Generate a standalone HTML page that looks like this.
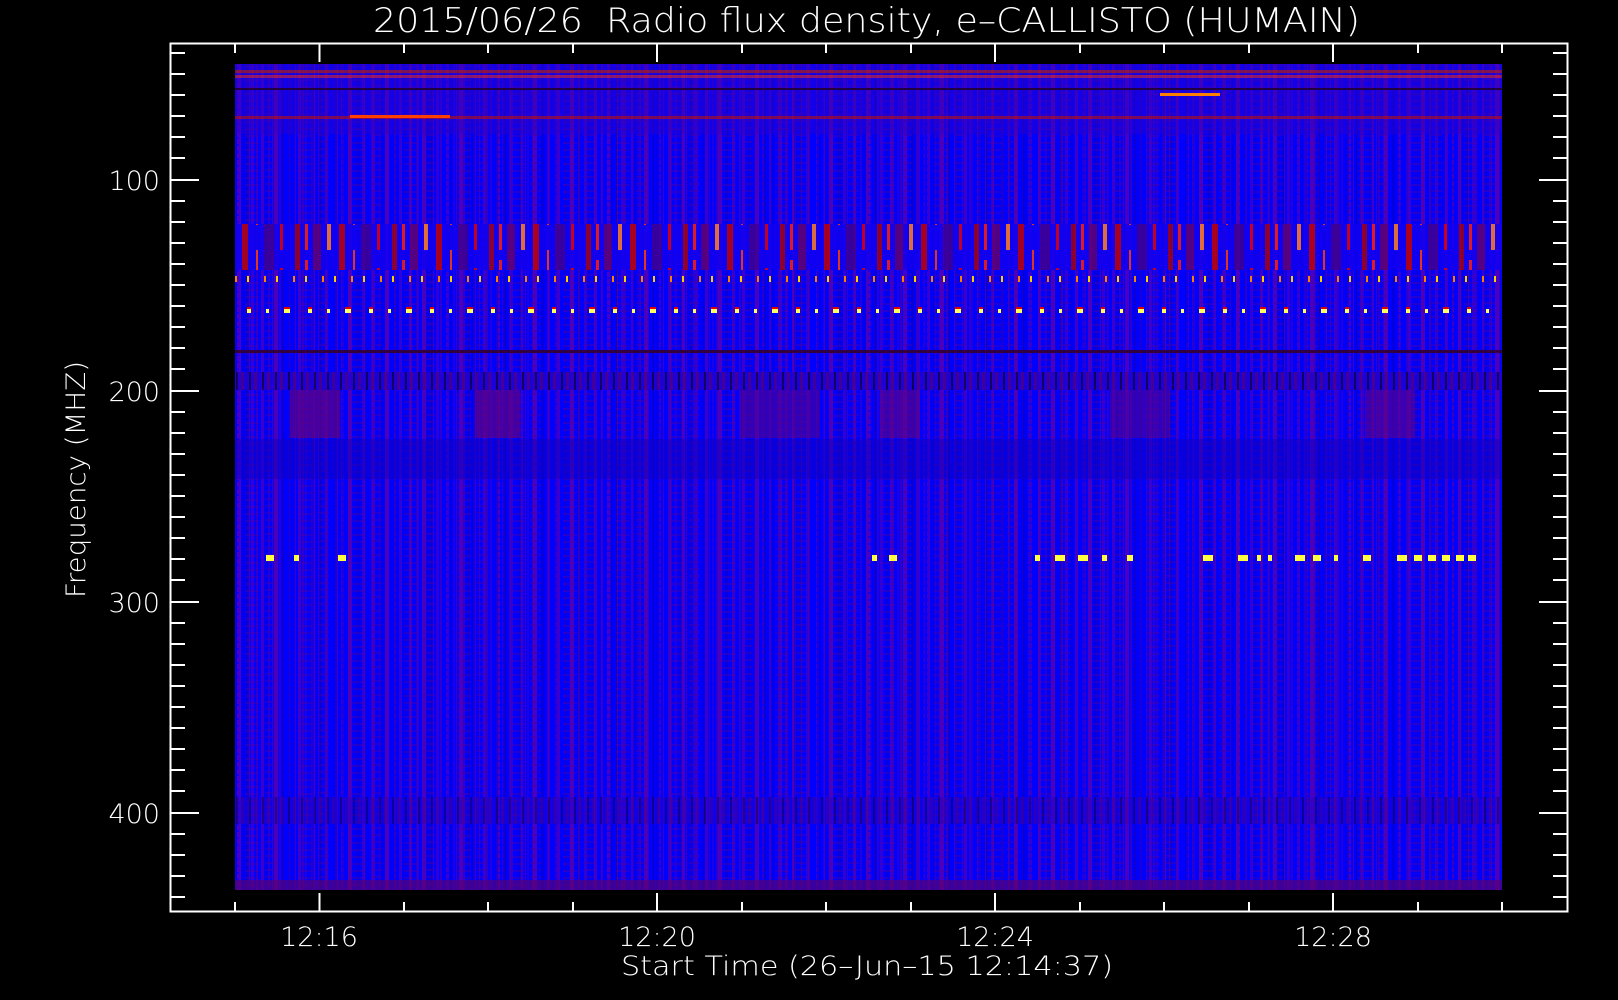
<!DOCTYPE html>
<html><head><meta charset="utf-8"><style>
html,body{margin:0;padding:0;background:#000;width:1618px;height:1000px;overflow:hidden}
svg{display:block}
text{font-family:"DejaVu Sans","Liberation Sans",sans-serif;font-weight:200;fill:#fff}
</style></head><body>
<svg width="1618" height="1000" viewBox="0 0 1618 1000" xmlns="http://www.w3.org/2000/svg">
<defs>
<pattern id="p1" width="37" height="900" patternUnits="userSpaceOnUse">
<rect x="0" y="0" width="37" height="900" fill="#0000ff"/>
<rect x="2" y="0" width="3" height="900" fill="#3a00d0"/>
<rect x="9" y="0" width="2" height="900" fill="#2000e0"/>
<rect x="15" y="0" width="4" height="900" fill="#4a00c0"/>
<rect x="24" y="0" width="1" height="900" fill="#1800a8"/>
<rect x="29" y="0" width="3" height="900" fill="#3000d8"/>
</pattern>
<pattern id="p2" width="23" height="900" patternUnits="userSpaceOnUse">
<rect x="3" y="0" width="2" height="900" fill="#5a00a0" opacity=".5"/>
<rect x="12" y="0" width="3" height="900" fill="#0000e0" opacity=".6"/>
<rect x="19" y="0" width="1" height="900" fill="#600090" opacity=".6"/>
</pattern>
<pattern id="hn" width="53" height="7" patternUnits="userSpaceOnUse">
<rect x="0" y="1" width="11" height="2" fill="#4000b0" opacity=".5"/>
<rect x="20" y="4" width="7" height="2" fill="#0000ff" opacity=".6"/>
<rect x="33" y="2" width="14" height="2" fill="#5000a0" opacity=".4"/>
</pattern>
<pattern id="burst" width="97" height="50" patternUnits="userSpaceOnUse">
<rect width="97" height="50" fill="#1000f0"/>
<rect x="4" width="5" height="50" fill="#a00010"/>
<rect x="14" y="10" width="3" height="40" fill="#ff2000"/>
<rect x="22" width="8" height="50" fill="#600070"/>
<rect x="36" y="20" width="4" height="30" fill="#ff8020"/>
<rect x="48" width="6" height="50" fill="#c00000"/>
<rect x="62" width="2" height="25" fill="#ff4000"/>
<rect x="70" width="10" height="50" fill="#400090"/>
<rect x="86" y="18" width="3" height="32" fill="#e00000"/>
</pattern>
<pattern id="dots" width="61" height="20" patternUnits="userSpaceOnUse">
<rect x="3" y="0" width="4" height="6" fill="#000"/>
<rect x="3" y="6" width="4" height="3" fill="#e00000"/>
<rect x="3" y="9" width="4" height="4" fill="#ffff60"/>
<rect x="22" y="0" width="3" height="6" fill="#000"/>
<rect x="22" y="9" width="3" height="4" fill="#ffff60"/>
<rect x="40" y="0" width="6" height="6" fill="#000"/>
<rect x="40" y="6" width="6" height="3" fill="#e00000"/>
<rect x="40" y="9" width="6" height="4" fill="#ffff60"/>
</pattern>
<pattern id="tick1" width="29" height="10" patternUnits="userSpaceOnUse">
<rect x="3" width="2" height="10" fill="#ff8000"/>
<rect x="15" width="2" height="10" fill="#ffd000"/>
</pattern>
<pattern id="dark" width="13" height="50" patternUnits="userSpaceOnUse">
<rect width="13" height="50" fill="#2000d0"/>
<rect x="2" width="2" height="50" fill="#100040"/>
<rect x="7" width="3" height="50" fill="#500080"/>
</pattern>
</defs>
<rect x="235" y="64" width="1267" height="826" fill="url(#p1)"/>
<rect x="235" y="64" width="1267" height="826" fill="url(#p2)"/>
<rect x="235" y="64" width="1267" height="826" fill="url(#hn)"/>
<rect x="235" y="64" width="1267" height="70" fill="#3000c0" opacity=".4"/>
<rect x="235" y="70" width="1267" height="3" fill="#c02000" opacity=".6"/>
<rect x="235" y="75" width="1267" height="3" fill="#ff3000" opacity=".5"/>
<rect x="235" y="88" width="1267" height="2" fill="#200040"/>
<rect x="235" y="116" width="1267" height="3" fill="#c01000" opacity=".6"/>
<rect x="350" y="115" width="100" height="3" fill="#ff4000"/>
<rect x="1160" y="93" width="60" height="3" fill="#ff8000"/>
<rect x="235" y="224" width="1267" height="46" fill="url(#burst)" opacity=".85"/>
<rect x="235" y="276" width="1267" height="6" fill="url(#tick1)"/>
<rect x="235" y="307" width="1267" height="13" fill="url(#dots)"/>
<rect x="235" y="350" width="1267" height="3" fill="#300040"/>
<rect x="235" y="372" width="1267" height="18" fill="url(#dark)" opacity=".8"/>
<rect x="290" y="390" width="50" height="48" fill="#600080" opacity=".7"/>
<rect x="475" y="390" width="45" height="48" fill="#600080" opacity=".7"/>
<rect x="740" y="390" width="80" height="48" fill="#500090" opacity=".6"/>
<rect x="880" y="390" width="40" height="48" fill="#600080" opacity=".6"/>
<rect x="1110" y="390" width="60" height="48" fill="#500090" opacity=".6"/>
<rect x="1365" y="390" width="50" height="48" fill="#600080" opacity=".6"/>
<rect x="235" y="439" width="1267" height="40" fill="#1000c0" opacity=".5"/>
<g fill="#ffff40">
<rect x="266" y="555" width="8" height="6"/><rect x="294" y="555" width="5" height="6"/><rect x="338" y="555" width="8" height="6"/>
<rect x="872" y="555" width="5" height="6"/><rect x="889" y="555" width="8" height="6"/>
<rect x="1035" y="555" width="5" height="6"/><rect x="1055" y="555" width="10" height="6"/><rect x="1078" y="555" width="10" height="6"/><rect x="1102" y="555" width="5" height="6"/><rect x="1127" y="555" width="6" height="6"/>
<rect x="1203" y="555" width="10" height="6"/><rect x="1238" y="555" width="10" height="6"/><rect x="1257" y="555" width="4" height="6"/><rect x="1268" y="555" width="4" height="6"/><rect x="1295" y="555" width="10" height="6"/><rect x="1313" y="555" width="8" height="6"/><rect x="1334" y="555" width="4" height="6"/><rect x="1363" y="555" width="8" height="6"/><rect x="1397" y="555" width="10" height="6"/><rect x="1414" y="555" width="8" height="6"/><rect x="1428" y="555" width="8" height="6"/><rect x="1442" y="555" width="8" height="6"/><rect x="1456" y="555" width="8" height="6"/><rect x="1468" y="555" width="8" height="6"/>
</g>
<rect x="235" y="797" width="1267" height="27" fill="url(#dark)" opacity=".5"/>
<rect x="235" y="880" width="1267" height="10" fill="#600060" opacity=".6"/>
<rect x="170.5" y="43.5" width="1397" height="868" fill="none" stroke="#fff" stroke-width="2"/>
<g stroke="#fff" stroke-width="2">
<path d="M235 44v9M235 911v-9M319.5 44v18M319.5 911v-18M404 44v9M404 911v-9M488 44v9M488 911v-9M573 44v9M573 911v-9M657 44v18M657 911v-18M742 44v9M742 911v-9M826 44v9M826 911v-9M911 44v9M911 911v-9M995 44v18M995 911v-18M1080 44v9M1080 911v-9M1164 44v9M1164 911v-9M1249 44v9M1249 911v-9M1333 44v18M1333 911v-18M1418 44v9M1418 911v-9M1502 44v9M1502 911v-9"/>
<path d="M171 53h14M171 74h14M171 95h14M171 116h14M171 137h14M171 158h14M171 180h28M171 201h14M171 222h14M171 243h14M171 264h14M171 285h14M171 306h14M171 327h14M171 348h14M171 369h14M171 391h28M171 412h14M171 433h14M171 454h14M171 475h14M171 496h14M171 517h14M171 538h14M171 559h14M171 580h14M171 602h28M171 623h14M171 644h14M171 665h14M171 686h14M171 707h14M171 728h14M171 749h14M171 770h14M171 791h14M171 813h28M171 834h14M171 855h14M171 876h14M171 897h14"/>
<path d="M1567 53h-14M1567 74h-14M1567 95h-14M1567 116h-14M1567 137h-14M1567 158h-14M1567 180h-28M1567 201h-14M1567 222h-14M1567 243h-14M1567 264h-14M1567 285h-14M1567 306h-14M1567 327h-14M1567 348h-14M1567 369h-14M1567 391h-28M1567 412h-14M1567 433h-14M1567 454h-14M1567 475h-14M1567 496h-14M1567 517h-14M1567 538h-14M1567 559h-14M1567 580h-14M1567 602h-28M1567 623h-14M1567 644h-14M1567 665h-14M1567 686h-14M1567 707h-14M1567 728h-14M1567 749h-14M1567 770h-14M1567 791h-14M1567 813h-28M1567 834h-14M1567 855h-14M1567 876h-14M1567 897h-14"/>
</g>
<text x="373" y="32" font-size="34" textLength="987" lengthAdjust="spacingAndGlyphs">2015/06/26&#160;&#160;Radio flux density, e–CALLISTO (HUMAIN)</text>
<g font-size="27" text-anchor="end">
<text x="160" y="190">100</text><text x="160" y="401">200</text><text x="160" y="612">300</text><text x="160" y="823">400</text>
</g>
<g font-size="27" text-anchor="middle">
<text x="319" y="946">12:16</text><text x="657" y="946">12:20</text><text x="995" y="946">12:24</text><text x="1333" y="946">12:28</text>
</g>
<text x="621" y="975" font-size="27" textLength="492" lengthAdjust="spacingAndGlyphs">Start Time (26–Jun–15 12:14:37)</text>
<text transform="translate(85,598) rotate(-90)" font-size="27" textLength="237" lengthAdjust="spacingAndGlyphs">Frequency (MHZ)</text>
</svg>
</body></html>
